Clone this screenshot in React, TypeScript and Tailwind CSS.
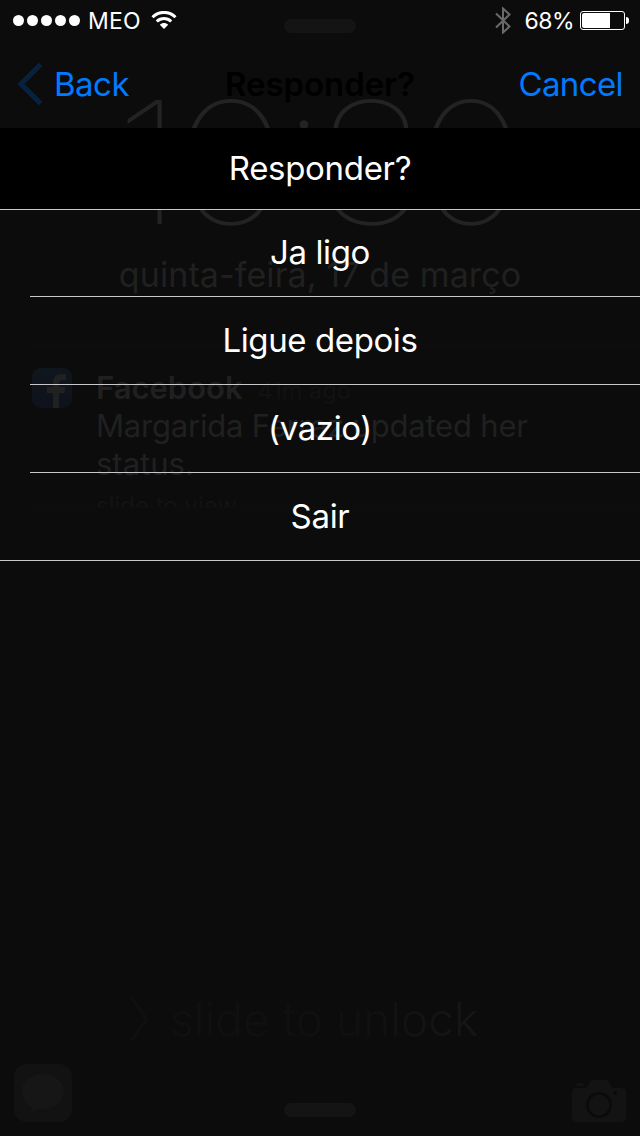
import type { ReactNode } from 'react';

interface MenuItem {
  label: string;
  spacing: string;
}

const ITEMS: MenuItem[] = [
  { label: 'Ja ligo', spacing: 'tracking-[-0.4px]' },
  { label: 'Ligue depois', spacing: 'tracking-[-0.4px]' },
  { label: '(vazio)', spacing: 'tracking-[-0.4px]' },
  { label: 'Sair', spacing: 'tracking-[-0.3px]' },
];

const Handle = () => <div className="h-[14px] w-[72px] rounded-full bg-[#141414]" />;

const FacebookIcon = () => (
  <svg className="size-10 shrink-0" viewBox="0 0 40 40">
    <defs>
      <linearGradient id="fb" x1="0" y1="0" x2="0" y2="1">
        <stop offset="0" stopColor="#10161e" />
        <stop offset="1" stopColor="#0e121c" />
      </linearGradient>
    </defs>
    <rect width="40" height="40" rx="9" fill="url(#fb)" />
    <path
      d="M21 40V25h-6v-6h6v-4c0-6 3.500-9 8.500-9H34v6h-3.200C28.500 12 27 13 27 15.500V19h6.300l-.8 6H27v15z"
      fill="#212121"
    />
  </svg>
);

const MessagesIcon = () => (
  <svg className="size-[58px]" viewBox="0 0 58 58">
    <rect width="58" height="58" rx="13" fill="#121212" />
    <path
      d="M29 10c11.600 0 21 7.900 21 17.600S40.600 45.200 29 45.200H22c-2 1.600-4 2.600-6.500 3 1.300-1.500 2.300-3.200 2.500-5C12 39.600 8 34 8 27.600 8 17.900 17.400 10 29 10z"
      fill="#161616"
    />
  </svg>
);

const CameraIcon = () => (
  <svg className="h-[42px] w-[54px]" viewBox="0 0 54 42">
    <path
      d="M4 8h8.500c2 0 3-1 3.800-2.700l1-2.300c.8-2 2-3 4-3h12.200c2 0 3.200 1 4 3l1 2.300C39.300 7 40.300 8 42.300 8H50c2.500 0 4 1.500 4 4v26c0 2.500-1.500 4-4 4H4c-2.500 0-4-1.500-4-4V12c0-2.500 1.500-4 4-4z"
      fill="#131313"
    />
    <rect x="4" y="3" width="8" height="3" rx="1.500" fill="#131313" />
    <circle cx="27" cy="25" r="11.700" fill="none" stroke="#0b0b0b" strokeWidth="2.600" />
    <circle cx="43" cy="13" r="2" fill="#0b0b0b" />
  </svg>
);

const Clock = () => (
  <div className="mt-[64px] flex h-[130px] w-full pl-[116px] text-center text-[170px] leading-[130px] font-thin text-[#232323]">
    <span className="flex w-[65px] scale-x-110 justify-center">1</span>
    <span className="flex w-[100px] scale-x-[1.18] justify-center">0</span>
    <span className="flex w-[46px] -translate-y-4 justify-center">:</span>
    <span className="flex w-[88px] scale-x-[1.12] justify-center">3</span>
    <span className="flex w-[112px] scale-x-[1.12] justify-center">0</span>
  </div>
);

// Dimmed lock screen that shows through the menu
const LockScreen = () => (
  <div className="absolute inset-0 flex flex-col items-center overflow-hidden pt-[19px] text-[#202020]">
    <Handle />
    <Clock />
    <div className="mt-7 h-10 text-[34px] leading-10 tracking-[0.1px] whitespace-nowrap">quinta-feira, 17 de março</div>

    <div className="mt-[49px] w-full pl-8">
      <div className="flex h-[164px] overflow-hidden border-y border-[#0e0e0e] pt-[23px]">
        <FacebookIcon />
        <div className="ml-6 pt-px text-[31px] leading-[38px] whitespace-nowrap">
          <div className="flex h-[38px] items-baseline gap-[15px]">
            <span className="font-semibold">Facebook</span>
            <span className="text-[23.5px] text-[#121212]">41m ago</span>
          </div>
          <div className="tracking-[-0.2px]">Margarida Ferraz updated her</div>
          <div>status.</div>
          <div className="text-[24px] leading-[45px] text-[#131313]">slide to view</div>
        </div>
      </div>
    </div>

    <div className="mt-auto flex h-12 w-full items-center pl-[129px]">
      <svg className="h-[46px] w-5" viewBox="0 0 20 46" fill="none" stroke="#101010" strokeWidth="3">
        <path d="M2 1l16 22L2 45" />
      </svg>
      <span className="ml-[21px] bg-linear-to-r from-[#101010] from-60% to-[#161616] bg-clip-text text-[46px] leading-[60px] font-light whitespace-nowrap text-transparent">
        slide to unlock
      </span>
    </div>
    <div className="mt-[21px] grid w-full grid-cols-3 items-end px-[14px] pb-[14px]">
      <MessagesIcon />
      <div className="flex justify-center pb-[5px]">
        <Handle />
      </div>
      <div className="flex justify-end">
        <CameraIcon />
      </div>
    </div>
  </div>
);

const StatusBar = () => (
  <div className="flex h-10 items-center pr-[11px] pl-[13px] text-[23px] leading-10">
    <div className="flex gap-[3px]">
      {[0, 1, 2, 3, 4].map((dot) => (
        <span key={dot} className="size-[11px] rounded-full bg-white" />
      ))}
    </div>
    <span className="ml-2 pt-[2px] tracking-[0.2px]">MEO</span>
    <svg className="ml-[10px] h-[18px] w-[26px]" viewBox="0 0 26 18" fill="none" stroke="#fff" strokeWidth="3">
      <path d="M1.500 6.200C8-.2 18-.2 24.500 6.200" />
      <path d="M5.800 10.500C10 6.600 16 6.600 20.200 10.500" />
      <path d="M13 18l-4.200-4.300c2.400-2.200 6-2.200 8.400 0z" fill="#fff" stroke="none" />
    </svg>
    <svg className="ml-auto h-[27px] w-4" viewBox="0 0 16 27" fill="none" stroke="#6a6a6a" strokeWidth="2">
      <path d="M1 6.500l13.500 13L8 25.500V1.500l6.500 6L1 20.500" />
    </svg>
    <span className="ml-[13px] pt-[2px] tracking-[-0.5px]">68%</span>
    <div className="ml-[6px] flex h-[19px] w-[45px] rounded-[3px] border border-white p-px">
      <div className="w-7 rounded-l-[2px] bg-white" />
    </div>
    <div className="ml-px h-[7px] w-[3px] rounded-r-full bg-white" />
  </div>
);

const NavBar = ({ children }: { children: ReactNode }) => (
  <div className="grid h-[88px] grid-cols-[1fr_auto_1fr] items-center px-[17px] text-[33px] leading-[88px] whitespace-nowrap text-[#007aff]">
    <div className="flex items-center">
      <svg className="h-[42px] w-[26px]" viewBox="0 0 26 42" fill="none" stroke="#07223f" strokeWidth="5">
        <path d="M23.500 1.500L4 21l19.500 19.500" />
      </svg>
      <span className="ml-[11px] tracking-[-0.5px]">Back</span>
    </div>
    <span className="font-semibold tracking-[-0.1px] text-black">{children}</span>
    <span className="text-right tracking-[-0.6px]">Cancel</span>
  </div>
);

export default function App() {
  return (
    <div className="relative h-[1136px] w-[640px] overflow-hidden bg-[#0c0c0c] font-['Inter',sans-serif] text-white">
      <LockScreen />
      <div className="relative">
        <StatusBar />
        <NavBar>Responder?</NavBar>
        <div className="h-[82px] border-b border-[#c8c7cc] bg-black text-center text-[33px] leading-[80px] tracking-[-0.3px]">
          Responder?
        </div>
        <div className="border-b border-[#c8c7cc]">
          {ITEMS.map((item, index) => (
            <div
              key={item.label}
              className="relative h-[88px] text-center text-[33px] leading-[86px] first:h-[87px] first:leading-[84px] last:h-[87px]"
            >
              <span className={item.spacing}>{item.label}</span>
              {index < ITEMS.length - 1 && (
                <div className="absolute right-0 bottom-0 left-[30px] h-px bg-[#c8c7cc]" />
              )}
            </div>
          ))}
        </div>
      </div>
    </div>
  );
}
